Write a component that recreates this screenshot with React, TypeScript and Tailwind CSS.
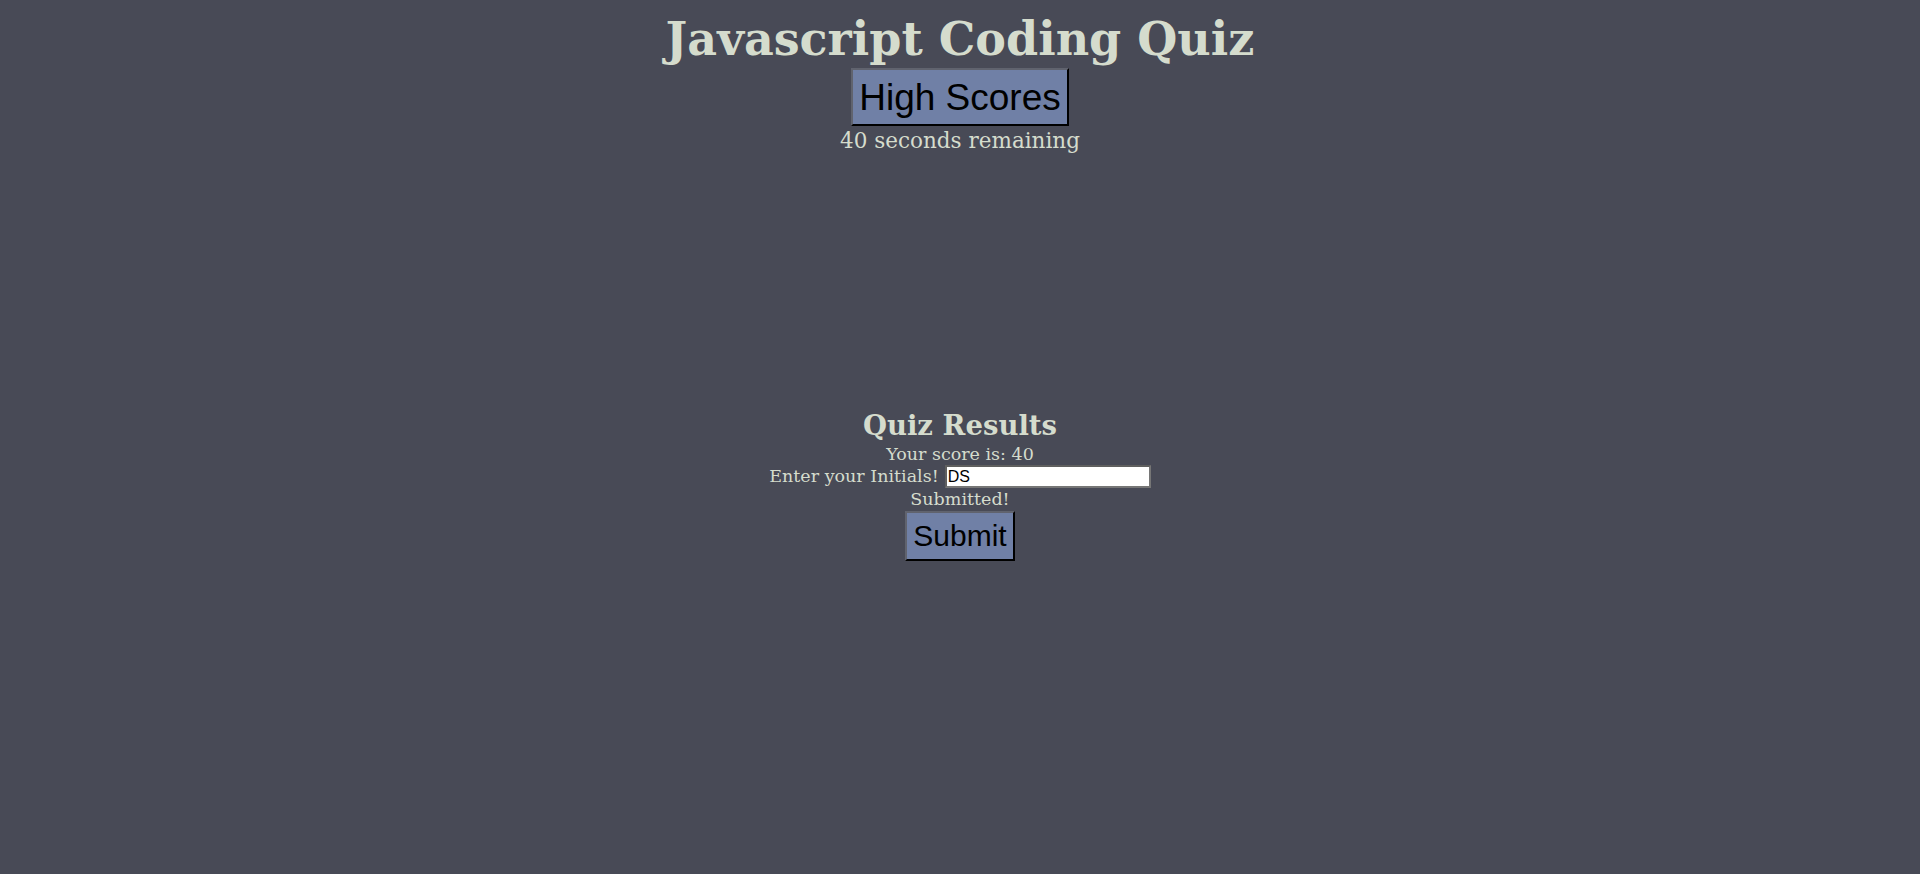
import { useState } from "react";

const SERIF = "font-['DejaVu_Serif','Liberation_Serif',serif]";
const SANS = "font-['Liberation_Sans',Arial,sans-serif]";
const BTN =
  "whitespace-nowrap border-2 border-t-[#60636e] border-l-[#60636e] border-b-black border-r-black bg-[#7080a6] px-[6px] leading-none text-black";

export default function App() {
  const [initials, setInitials] = useState("DS");

  return (
    <div className={`min-h-[874px] bg-[#484a56] text-center text-[#d5dccd] ${SERIF}`}>
      <h1 className="pt-[14px] text-[46px] font-bold leading-[50px]">Javascript Coding Quiz</h1>

      <div className="mt-[4px] flex justify-center">
        <button className={`h-[58px] text-[37px] ${BTN} ${SANS}`}>High Scores</button>
      </div>

      <p className="text-[21.5px] leading-[29px]">40 seconds remaining</p>

      <div className="h-[252px]" />

      <section className="flex flex-col items-center">
        <h2 className="text-[27.5px] font-bold leading-[36px]">Quiz Results</h2>
        <p className="text-[17.5px] leading-[22px]">Your score is: 40</p>
        <div className="flex h-[23px] items-center justify-center gap-[6px]">
          <label className="text-[17.5px] leading-[23px]">Enter your Initials!</label>
          <input
            value={initials}
            onChange={(e) => setInitials(e.target.value)}
            className={`h-[23px] w-[206px] border-2 border-[#767676] border-t-[#5f5f5f] border-l-[#5f5f5f] bg-white px-[1px] text-[16px] text-black outline-none ${SANS}`}
          />
        </div>
        <p className="text-[17.5px] leading-[23px]">Submitted!</p>
        <button className={`h-[50px] text-[30px] ${BTN} ${SANS}`}>Submit</button>
      </section>
    </div>
  );
}
